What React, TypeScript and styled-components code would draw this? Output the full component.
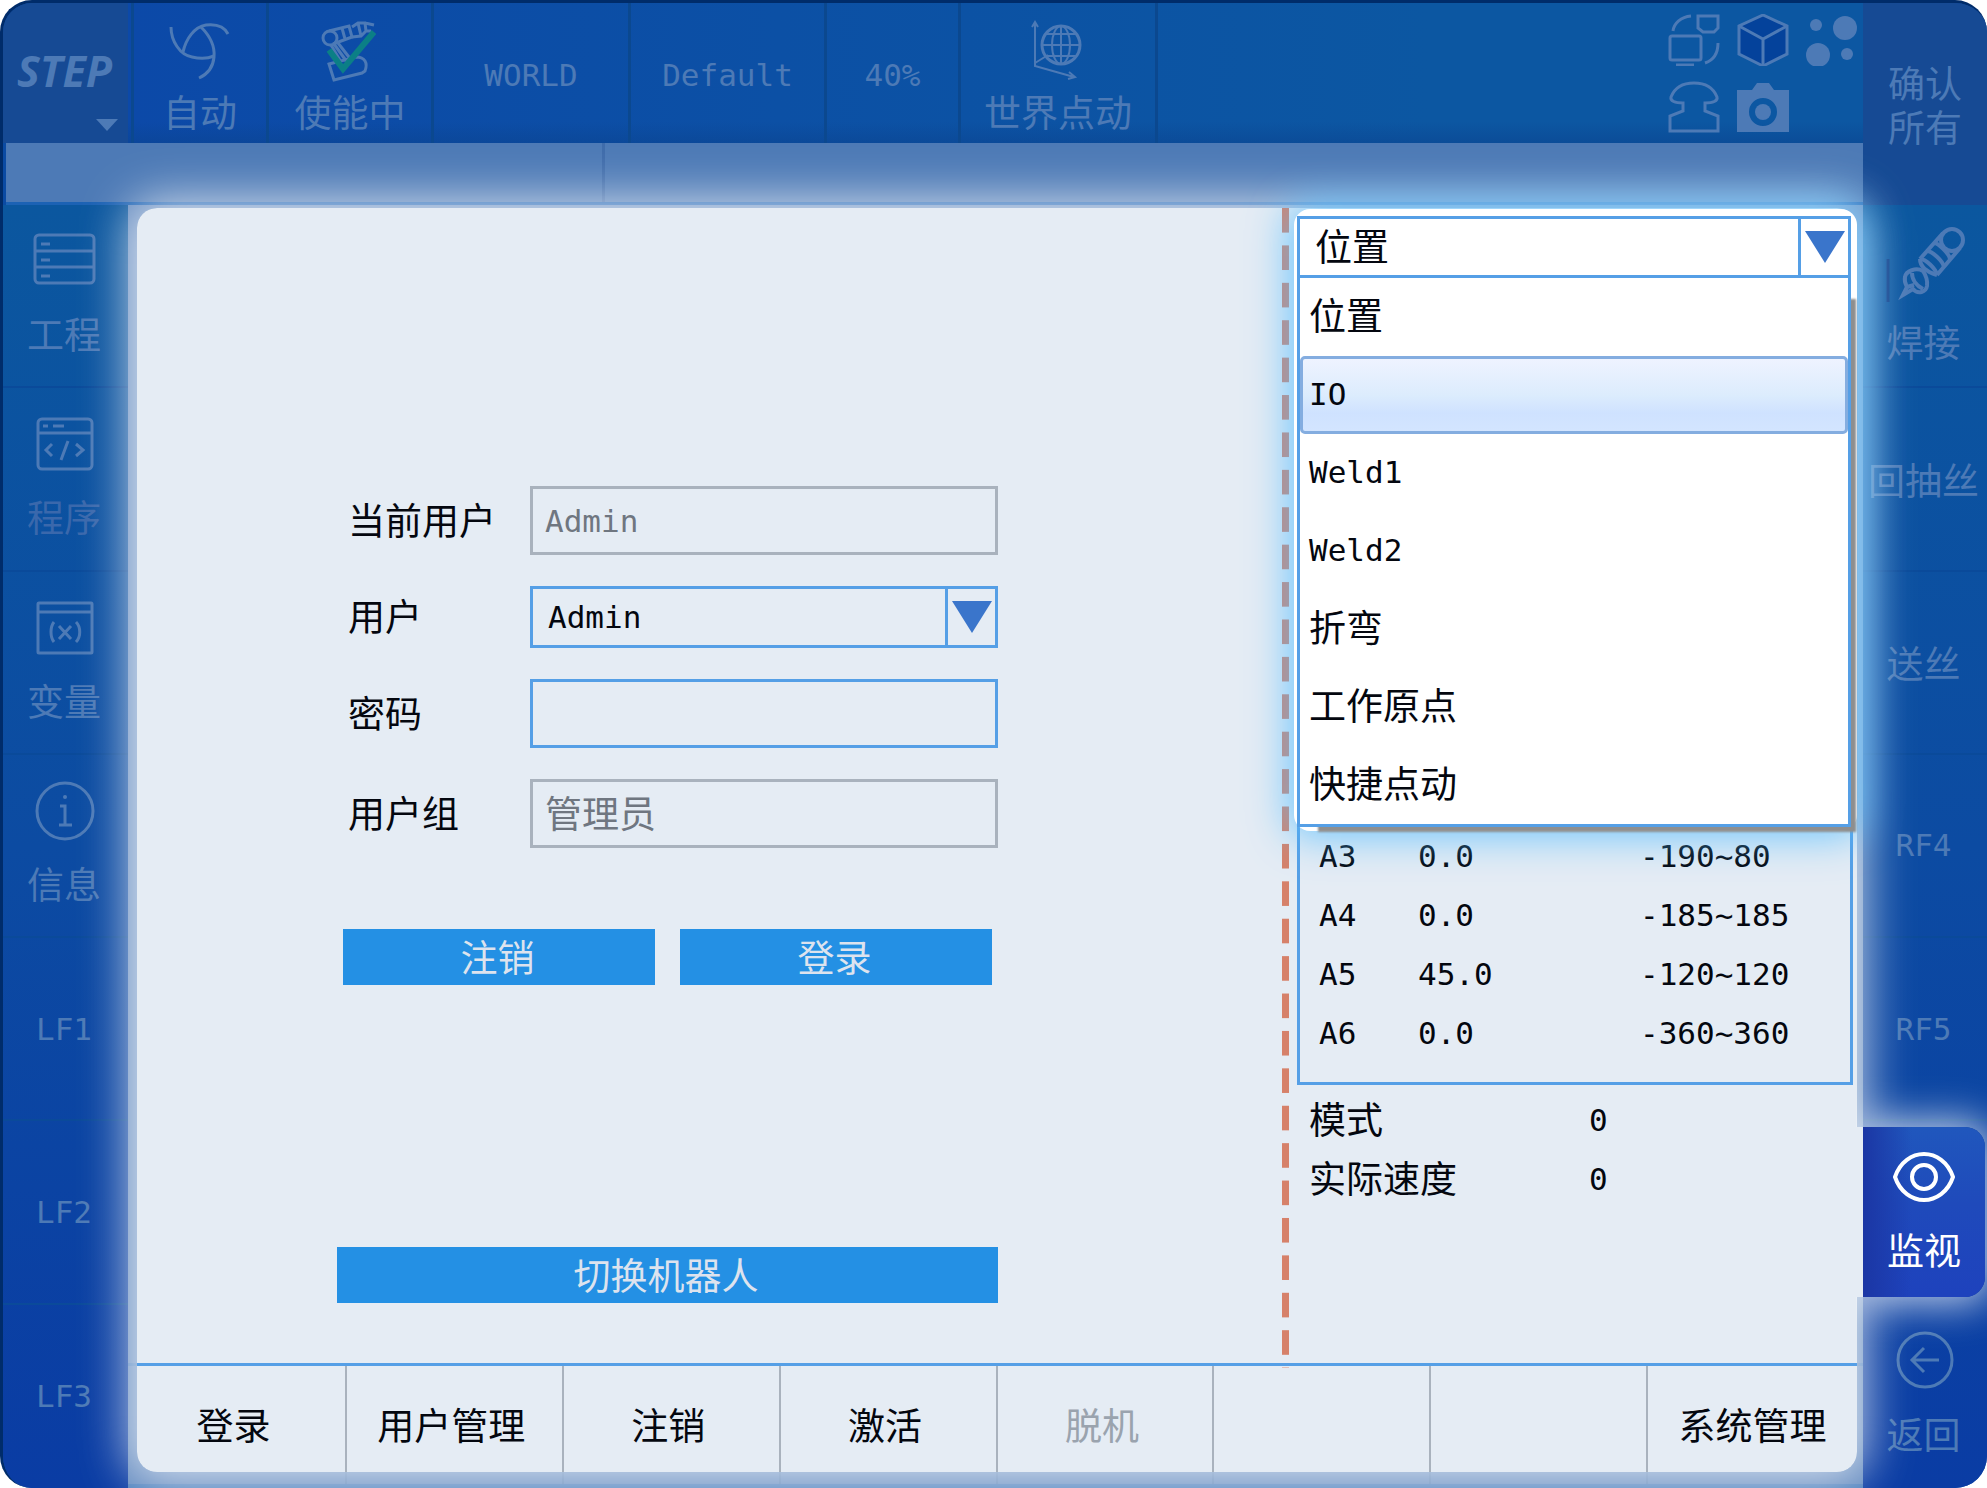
import React from 'react';
import styled, { createGlobalStyle, css } from 'styled-components';

const cjk = `"Noto Sans CJK SC", "Noto Sans", sans-serif`;
const mono = `"DejaVu Sans Mono", "Liberation Mono", monospace`;

const c = {
  edge: '#002c6a',
  dim: '#4d7ab6',
  panel: '#e5ecf4',
  line: '#559fe6',
  grey: '#a9b2bd',
  ink: '#04070f',
  action: '#2490e4',
  arrow: '#3a75cb',
};

const GlobalStyle = createGlobalStyle`
  *, *::before, *::after { box-sizing: border-box; }
  html, body, #root { height: 100%; margin: 0; }
  body { background: #fff; }
  button, input, select { font: inherit; color: inherit; margin: 0; border-radius: 0; }
`;

const latin = css`
  font-family: ${mono};
  font-size: 31px;
`;

const Frame = styled.div`
  min-height: 100vh;
  display: grid;
  grid-template-columns: 125px minmax(0, 1fr) 124px;
  grid-template-rows: 140px 62px minmax(0, 1fr);
  border-top: 3px solid ${c.edge};
  border-left: 3px solid ${c.edge};
  border-radius: 32px;
  overflow: hidden;
  background: #0b4ba3;
  color: ${c.dim};
  font-family: ${cjk};
  font-size: 37px;
  line-height: 44px;
`;

const PlainButton = styled.button`
  border: 0;
  padding: 0;
  background: none;
  cursor: pointer;
`;

const Logo = styled(PlainButton)`
  display: flex;
  flex-direction: column;
  align-items: center;
  padding: 44px 2px 0 0;
  background: #164a94;
  font: italic 700 43px/48px "Open Sans", "Noto Sans", sans-serif;
`;

const LogoCaret = styled.svg`
  align-self: flex-end;
  margin: 24px 8px 0 0;
`;

const TopBar = styled.header`
  display: grid;
  grid-template-columns: 141px 165px 197px 196px 134px 197px minmax(0, 1fr);
  background: linear-gradient(180deg, transparent 85%, #0a438f88), linear-gradient(90deg, #0c49a8, #0c57a2 75%);
`;

const TopCell = styled(PlainButton)<{ $latin?: boolean }>`
  display: flex;
  flex-direction: column;
  align-items: center;
  justify-content: ${p => (p.$latin ? 'center' : 'flex-start')};
  gap: 6px;
  padding-top: ${p => (p.$latin ? 4 : 16)}px;
  border-right: 3px solid #0b488f;
  &:first-child { border-left: 3px solid #0b488f; margin-left: 3px; }
  ${p => p.$latin && latin}
`;

const Tools = styled.div`
  display: grid;
  grid-template-columns: repeat(3, 52px);
  grid-auto-rows: 52px;
  gap: 15px 17px;
  justify-content: end;
  padding: 11px 5px 0 0;
`;

const ConfirmAll = styled(PlainButton)`
  grid-row: 1 / 3;
  grid-column: 3;
  padding: 0 20px;
  background: #164a94;
`;

const InfoBar = styled.div`
  grid-row: 2;
  grid-column: 1 / 3;
  display: grid;
  grid-template-columns: 596px minmax(0, 1fr);
  margin-left: 3px;
  background: ${c.dim};
  border-bottom: 3px solid #1c62b4;
`;

const InfoSlot = styled.div`
  border-left: 3px solid #3f6cab;
  &:first-child { border-left: 0; }
`;

const Side = styled.nav`
  grid-row: 3;
  display: grid;
  grid-template-rows: repeat(7, minmax(0, 1fr));
  background: linear-gradient(180deg, #0b579f, #0c4ba2 50%, #0a3ca4);
`;

const SideItem = styled(PlainButton)<{ $icon?: boolean; $latin?: boolean; $last?: boolean; $dim?: boolean }>`
  display: flex;
  flex-direction: column;
  align-items: center;
  justify-content: ${p => (p.$icon ? 'flex-start' : 'center')};
  gap: 18px;
  padding: ${p => (p.$icon ? 24 : 0)}px 3px 0 0;
  white-space: nowrap;
  color: ${p => (p.$dim ? '#3a68ac' : 'inherit')};
  border-bottom: ${p => (p.$last ? 0 : 2)}px solid #0a4a9a;
  ${p => p.$latin && latin}
  svg { color: ${c.dim}; }
`;

const ActiveTab = styled(PlainButton)`
  position: relative;
  z-index: 5;
  display: flex;
  flex-direction: column;
  align-items: center;
  gap: 18px;
  margin: 6px 2px 8px 0;
  padding: 18px 0 0 0;
  color: #fff;
  border-radius: 0 20px 20px 0;
  background: linear-gradient(90deg, #1b36a4, transparent 40%), linear-gradient(180deg, #2057bd, #1f4abb 45%, #1e42bd);
  box-shadow: 0 0 40px 6px rgba(255, 255, 255, 0.75);
  clip-path: inset(-60px -4px -60px -7px);
  &::before {
    content: '';
    position: absolute;
    inset: 0 100% 0 -7px;
    background: ${c.panel};
  }
`;

const Icon = styled.svg<{ $h?: number }>`
  display: block;
  flex: none;
  width: 64px;
  height: ${p => p.$h ?? 64}px;
  fill: none;
  stroke: currentColor;
  stroke-width: 3;
`;

const ToolIcon = styled(Icon)`
  width: 52px;
  height: 52px;
`;

const Content = styled.main`
  grid-row: 3;
  position: relative;
  display: flex;
  flex-direction: column;
  background: ${c.panel};
  color: ${c.ink};
`;

const Rim = styled.div`
  position: absolute;
  inset: 0;
  z-index: 2;
  overflow: hidden;
  pointer-events: none;
  &::before {
    content: '';
    position: absolute;
    inset: 3px 6px 16px 9px;
    border-radius: 20px;
    box-shadow: 0 0 0 32px rgba(77, 122, 182, 0.85);
  }
`;

const Glow = styled.div`
  position: absolute;
  inset: 3px 6px 16px 9px;
  z-index: 2;
  border-radius: 20px;
  pointer-events: none;
  box-shadow: 0 0 48px 8px rgba(255, 255, 255, 0.75);
`;

const Body = styled.div`
  flex: 1;
  display: grid;
  grid-template-columns: minmax(0, 1fr) 7px 574px;
  padding-top: 3px;
`;

const Form = styled.form`
  width: 661px;
  margin-left: 209px;
  padding-top: 278px;
`;

const Fields = styled.div`
  display: grid;
  grid-template-columns: 182px minmax(0, 1fr);
  row-gap: 31px;
  align-items: center;
  padding-left: 11px;
  label { padding-bottom: 4px; }
`;

const TextBox = styled.input<{ $latin?: boolean }>`
  width: 100%;
  height: 69px;
  padding: 0 13px ${p => (p.$latin ? 0 : 4)}px 12px;
  border: 3px solid ${c.line};
  background: transparent;
  outline: 0;
  &:disabled { border-color: ${c.grey}; color: #6f7680; }
  ${p => p.$latin && latin}
`;

const Combo = styled.div`
  display: grid;
  grid-template-columns: minmax(0, 1fr) 50px;
  align-items: center;
  height: 62px;
  border: 3px solid ${c.line};
`;

const Select = styled.select<{ $latin?: boolean }>`
  grid-area: 1 / 1 / 2 / 3;
  width: 100%;
  height: 100%;
  padding: 0 60px ${p => (p.$latin ? 0 : 4)}px 15px;
  border: 0;
  outline: 0;
  appearance: none;
  background: transparent;
  ${p => p.$latin && latin}
`;

const ComboArrow = styled.span`
  grid-area: 1 / 2 / 2 / 3;
  display: flex;
  align-items: center;
  justify-content: center;
  height: 100%;
  border-left: 3px solid ${c.line};
  pointer-events: none;
`;

const Actions = styled.div`
  display: grid;
  grid-template-columns: 1fr 1fr;
  gap: 25px;
  padding: 81px 6px 0;
`;

const Action = styled(PlainButton)`
  height: 56px;
  padding: 0 3px 3px 0;
  background: ${c.action};
  color: #dde3ee;
`;

const SwitchRobot = styled(Action)`
  width: 100%;
  margin-top: 262px;
`;

const DashLine = styled.div`
  margin-bottom: -5px;
  background: linear-gradient(180deg, #d6816a 67%, transparent 67%) 0 0 / 7px 37px no-repeat round;
`;

const Monitor = styled.aside`
  padding: 1px 6px 0 5px;
`;

const Spot = styled.section`
  position: relative;
  z-index: 3;
  height: 622px;
  padding: 7px 6px 5px 3px;
  background: #fff;
  border-radius: 16px;
  box-shadow: 0 0 40px 6px rgba(85, 190, 255, 0.8);
`;

const Menu = styled.ul`
  margin: 0;
  padding: 0;
  list-style: none;
  border: 3px solid ${c.line};
  border-top: 0;
  background: #fff;
  box-shadow: 13px 13px 2px -8px #8e8e8e;
`;

const Option = styled.li<{ $on?: boolean; $latin?: boolean }>`
  display: flex;
  align-items: center;
  height: 78px;
  padding: 0 0 ${p => (p.$latin ? 2 : 6)}px 6px;
  border: 3px solid transparent;
  border-radius: 5px;
  ${p => p.$latin && latin}
  ${p =>
    p.$on &&
    css`
      border-color: #84ade0;
      background: linear-gradient(180deg, #eef3ff, #dcecfd 50%, #cfe2ff 75%, #d3e5ff);
    `}
`;

const JointBox = styled.div`
  margin: -5px 4px 0 3px;
  padding: 0 0 20px 19px;
  border: 3px solid ${c.line};
  border-top: 0;
`;

const Joints = styled.table`
  width: 100%;
  border-collapse: collapse;
  table-layout: fixed;
  ${latin}
  td, th { height: 59px; padding: 0; text-align: left; font-weight: 400; }
  th { width: 99px; }
  td:nth-child(2) { width: 222px; }
`;

const Status = styled.dl`
  display: grid;
  grid-template-columns: 280px 1fr;
  grid-auto-rows: 59px;
  align-items: center;
  margin: 5px 0 0 15px;
  dt, dd { margin: 0; }
  dt { padding-bottom: 3px; }
  dd { ${latin} }
`;

const BottomBar = styled.nav`
  display: grid;
  grid-template-columns: repeat(8, minmax(0, 1fr));
  height: 125px;
  border-top: 3px solid ${c.line};
  border-bottom: 4px solid ${c.line};
`;

const BottomItem = styled(PlainButton)`
  padding: 0 6px 3px 0;
  border-left: 2px solid ${c.grey};
  &:first-child { border-left: 0; }
  &:disabled { color: #9aa3ae; cursor: default; }
`;

const Arrow = () => (
  <ComboArrow>
    <svg width="40" height="32" viewBox="0 0 40 32" aria-hidden="true">
      <path d="M0 0H40L20 32Z" fill={c.arrow} />
    </svg>
  </ComboArrow>
);

const AutoIcon = () => (
  <Icon viewBox="0 0 64 64" aria-hidden="true">
    <path d="M3 8C3 22 12 36 24 38C32 40 39 40 46 37" />
    <path d="M15 33C18 20 26 8 38 6C47 5 56 7 60 15" />
    <path d="M33 8C43 18 47 28 46 38C45 49 40 55 31 59" />
  </Icon>
);

const RobotIcon = () => (
  <Icon viewBox="0 0 64 64" aria-hidden="true">
    <circle cx="12" cy="19" r="7" />
    <path d="M11 12L31 7L34 18L15 25M24 9L27 20" />
    <path d="M34 8L40 4L47 4L48 12L43 17L34 18M40 4L43 17M47 4L56 6M48 12L53 12" />
    <path d="M13 26L23 43M20 24L34 42M16 25L29 43" />
    <path d="M11 45L38 38C47 38 50 44 47 52L44 54L16 61Z" />
    <path d="M11 31L25 50L56 13" stroke="#0b7f86" strokeWidth="6" />
  </Icon>
);

const GlobeIcon = () => (
  <Icon viewBox="0 0 64 64" aria-hidden="true">
    <g strokeWidth="2">
      <path d="M9 3V47L48 58M6 8L9 3L12 8M43 53L49 58L42 60M9 44L22 36" />
      <ellipse cx="35" cy="26" rx="9" ry="19" />
      <path d="M35 7V45M16 26H54M20 15H50M20 37H50" />
    </g>
    <circle cx="35" cy="26" r="19" />
  </Icon>
);

const SwapIcon = () => (
  <ToolIcon viewBox="0 0 52 52" aria-hidden="true">
    <rect x="2" y="22" width="31" height="24" rx="2" />
    <path d="M8 51H26M30 2H50V14L46 18H35L30 14ZM5 17C6 9 13 3 23 2M50 29C50 38 46 46 37 49" />
  </ToolIcon>
);

const CubeIcon = () => (
  <ToolIcon viewBox="0 0 52 52" aria-hidden="true">
    <path d="M26 1L50 12V40L26 52L2 40V12Z" fill="#04429b" />
    <path d="M2 12L26 25L50 12M26 25V52" />
  </ToolIcon>
);

const DotsIcon = () => (
  <ToolIcon viewBox="0 0 52 52" aria-hidden="true">
    <g fill="currentColor" stroke="none">
      <circle cx="10" cy="11" r="6" />
      <circle cx="39" cy="14" r="12" />
      <circle cx="12" cy="41" r="12" />
      <circle cx="41" cy="40" r="6" />
    </g>
  </ToolIcon>
);

const PendantIcon = () => (
  <ToolIcon viewBox="0 0 52 52" aria-hidden="true">
    <path d="M2 50V35L15 30V22C7 22 2 20 3 16C7 6 15 2 26 2S45 6 49 16C50 20 45 22 37 22V30L50 35V50Z" />
  </ToolIcon>
);

const CameraIcon = () => (
  <ToolIcon viewBox="0 0 52 52" aria-hidden="true">
    <path
      d="M0 9H15L20 2H32L37 9H52V51H0ZM26 17A14 14 0 1 0 26 45A14 14 0 1 0 26 17Z"
      fill="currentColor"
      fillRule="evenodd"
      stroke="none"
    />
    <circle cx="26" cy="31" r="8" fill="currentColor" stroke="none" />
  </ToolIcon>
);

const ProjectIcon = () => (
  <Icon viewBox="0 0 64 64" aria-hidden="true">
    <rect x="3" y="6" width="59" height="48" rx="4" />
    <path d="M3 22H62M3 38H62M9 15H18M9 31H18M9 47H18" />
  </Icon>
);

const ProgramIcon = () => (
  <Icon viewBox="0 0 64 64" aria-hidden="true">
    <rect x="6" y="7" width="54" height="50" rx="4" />
    <path d="M6 21H60M11 14H16M21 14H32" />
    <path d="M20 32L14 38L20 44M36 29L29 48M44 32L51 38L44 44" />
  </Icon>
);

const VariableIcon = () => (
  <Icon viewBox="0 0 64 64" aria-hidden="true">
    <rect x="6" y="7" width="54" height="50" rx="1" />
    <path d="M6 16H60" />
    <path d="M22 26C18 31 18 41 22 46M44 26C49 31 49 41 44 46M27 30L39 43M39 30L27 43" />
  </Icon>
);

const InfoIcon = () => (
  <Icon viewBox="0 0 64 64" aria-hidden="true">
    <circle cx="33" cy="32" r="28" />
    <path d="M28 27H33V46M27 46H40" />
    <circle cx="33" cy="18" r="2" fill="currentColor" stroke="none" />
  </Icon>
);

const TorchIcon = () => (
  <Icon $h={72} viewBox="0 0 64 72" overflow="visible" aria-hidden="true">
    <path d="M-4 30V73" stroke="#0a3a86" />
    <g strokeWidth="4">
      <circle cx="60" cy="11" r="11" />
      <path d="M51 4L28 30M68 19L45 46" />
      <path d="M42 14C46 14 57 24 58 30M35 22C40 22 51 32 52 38M28 30C34 30 44 40 45 46" />
      <path d="M28 30C28 36 32 42 45 46" />
      <path d="M31 42C24 38 14 42 13 48C12 53 14 56 15 58L11 66L21 60C26 66 34 63 35 57C36 50 33 45 31 42Z" />
      <path d="M20 44C20 51 25 57 31 60M15 58L22 56" />
    </g>
  </Icon>
);

const EyeIcon = () => (
  <Icon viewBox="0 0 64 64" aria-hidden="true">
    <g strokeWidth="4">
      <path d="M3 32C8 17 20 9 32 9S56 17 61 32C56 47 44 55 32 55S8 47 3 32Z" />
      <circle cx="32" cy="32" r="12" />
    </g>
  </Icon>
);

const BackIcon = () => (
  <Icon viewBox="0 0 64 64" aria-hidden="true">
    <circle cx="33" cy="31" r="27" />
    <path d="M47 31H19M32 19L20 31L32 43" />
  </Icon>
);

const joints = [
  ['A3', '0.0', '-190~80'],
  ['A4', '0.0', '-185~185'],
  ['A5', '45.0', '-120~120'],
  ['A6', '0.0', '-360~360'],
];

const options = [
  { text: '位置' },
  { text: 'IO', latin: true, on: true },
  { text: 'Weld1', latin: true },
  { text: 'Weld2', latin: true },
  { text: '折弯' },
  { text: '工作原点' },
  { text: '快捷点动' },
];

const bottom = ['登录', '用户管理', '注销', '激活', '脱机', '', '', '系统管理'];

export default function App() {
  return (
    <>
      <GlobalStyle />
      <Frame>
        <Logo type="button">
          STEP
          <LogoCaret width="22" height="12" viewBox="0 0 22 12" aria-hidden="true">
            <path d="M0 0H22L11 12Z" fill="currentColor" />
          </LogoCaret>
        </Logo>
        <TopBar>
          <TopCell><AutoIcon />自动</TopCell>
          <TopCell><RobotIcon />使能中</TopCell>
          <TopCell $latin>WORLD</TopCell>
          <TopCell $latin>Default</TopCell>
          <TopCell $latin>40%</TopCell>
          <TopCell><GlobeIcon />世界点动</TopCell>
          <Tools>
            <PlainButton><SwapIcon /></PlainButton>
            <PlainButton><CubeIcon /></PlainButton>
            <PlainButton><DotsIcon /></PlainButton>
            <PlainButton><PendantIcon /></PlainButton>
            <PlainButton><CameraIcon /></PlainButton>
          </Tools>
        </TopBar>
        <ConfirmAll>确认所有</ConfirmAll>
        <InfoBar>
          <InfoSlot />
          <InfoSlot />
        </InfoBar>

        <Side>
          <SideItem $icon><ProjectIcon />工程</SideItem>
          <SideItem $icon $dim><ProgramIcon />程序</SideItem>
          <SideItem $icon><VariableIcon />变量</SideItem>
          <SideItem $icon><InfoIcon />信息</SideItem>
          <SideItem $latin>LF1</SideItem>
          <SideItem $latin>LF2</SideItem>
          <SideItem $latin $last>LF3</SideItem>
        </Side>

        <Content>
          <Body>
            <Form onSubmit={e => e.preventDefault()}>
              <Fields>
                <label htmlFor="current">当前用户</label>
                <TextBox id="current" $latin disabled defaultValue="Admin" />
                <label htmlFor="user">用户</label>
                <Combo>
                  <Select id="user" $latin defaultValue="Admin">
                    <option>Admin</option>
                  </Select>
                  <Arrow />
                </Combo>
                <label htmlFor="password">密码</label>
                <TextBox id="password" type="password" />
                <label htmlFor="group">用户组</label>
                <TextBox id="group" disabled defaultValue="管理员" />
              </Fields>
              <Actions>
                <Action type="button">注销</Action>
                <Action type="submit">登录</Action>
              </Actions>
              <SwitchRobot type="button">切换机器人</SwitchRobot>
            </Form>
            <DashLine />
            <Monitor>
              <Spot>
                <Combo>
                  <Select aria-label="位置" defaultValue="位置">
                    <option>位置</option>
                  </Select>
                  <Arrow />
                </Combo>
                <Menu role="listbox">
                  {options.map(o => (
                    <Option key={o.text} role="option" aria-selected={!!o.on} $on={o.on} $latin={o.latin}>
                      {o.text}
                    </Option>
                  ))}
                </Menu>
              </Spot>
              <JointBox>
                <Joints>
                  <tbody>
                    {joints.map(([name, value, range]) => (
                      <tr key={name}>
                        <th scope="row">{name}</th>
                        <td>{value}</td>
                        <td>{range}</td>
                      </tr>
                    ))}
                  </tbody>
                </Joints>
              </JointBox>
              <Status>
                <dt>模式</dt>
                <dd>0</dd>
                <dt>实际速度</dt>
                <dd>0</dd>
              </Status>
            </Monitor>
          </Body>
          <BottomBar>
            {bottom.map((text, i) => (
              <BottomItem key={i} type="button" disabled={text === '脱机'}>{text}</BottomItem>
            ))}
          </BottomBar>
          <Rim />
          <Glow />
        </Content>

        <Side>
          <SideItem $icon><TorchIcon />焊接</SideItem>
          <SideItem>回抽丝</SideItem>
          <SideItem>送丝</SideItem>
          <SideItem $latin>RF4</SideItem>
          <SideItem $latin>RF5</SideItem>
          <ActiveTab><EyeIcon />监视</ActiveTab>
          <SideItem $icon $last><BackIcon />返回</SideItem>
        </Side>
      </Frame>
    </>
  );
}
